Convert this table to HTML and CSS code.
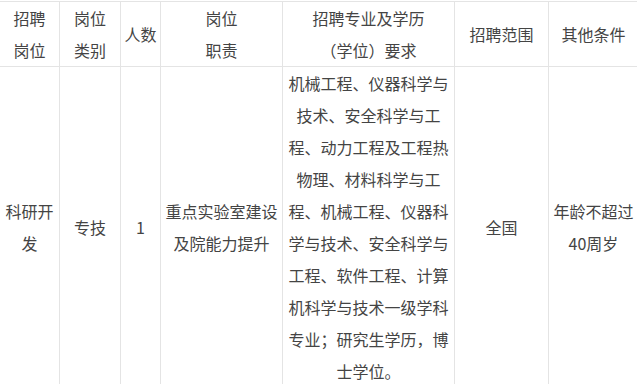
FILE: index.html
```html
<!DOCTYPE html>
<html lang="zh-CN">
<head>
<meta charset="utf-8">
<link rel="stylesheet" href="styles.css">
</head>
<body>
<table class="job-table">
  <colgroup>
    <col class="c1"><col class="c2"><col class="c3"><col class="c4"><col class="c5"><col class="c6"><col class="c7">
  </colgroup>
  <thead>
    <tr>
      <th>招聘<br>岗位</th>
      <th>岗位<br>类别</th>
      <th>人数</th>
      <th>岗位<br>职责</th>
      <th>招聘专业及学历<br>（学位）要求</th>
      <th>招聘范围</th>
      <th>其他条件</th>
    </tr>
  </thead>
  <tbody>
    <tr>
      <td>科研开发</td>
      <td>专技</td>
      <td>1</td>
      <td>重点实验室建设及院能力提升</td>
      <td>机械工程、仪器科学与技术、安全科学与工程、动力工程及工程热物理、材料科学与工程、机械工程、仪器科学与技术、安全科学与工程、软件工程、计算机科学与技术一级学科专业；研究生学历，博士学位。</td>
      <td>全国</td>
      <td>年龄不超过40周岁</td>
    </tr>
  </tbody>
</table>
</body>
</html>
```
FILE: styles.css
```css
html, body {
  margin: 0;
  padding: 0;
  background: #fff;
}
body {
  overflow: hidden;
}
.job-table {
  border-collapse: collapse;
  table-layout: fixed;
  width: 639px;
  margin: 1px 0 0 -1px;
  font-family: "Noto Sans CJK SC", "Noto Sans", sans-serif;
  font-size: 16px;
  line-height: 32px;
  color: #444;
}
.job-table th,
.job-table td {
  border: 1px solid #e4e4e4;
  padding: 0 3px;
  text-align: center;
  vertical-align: middle;
  font-weight: normal;
  word-break: break-all;
}
.c1 { width: 60px; }
.c2 { width: 61px; }
.c3 { width: 40px; }
.c4 { width: 122px; }
.c5 { width: 172px; }
.c6 { width: 94px; }
.c7 { width: 90px; }
```
